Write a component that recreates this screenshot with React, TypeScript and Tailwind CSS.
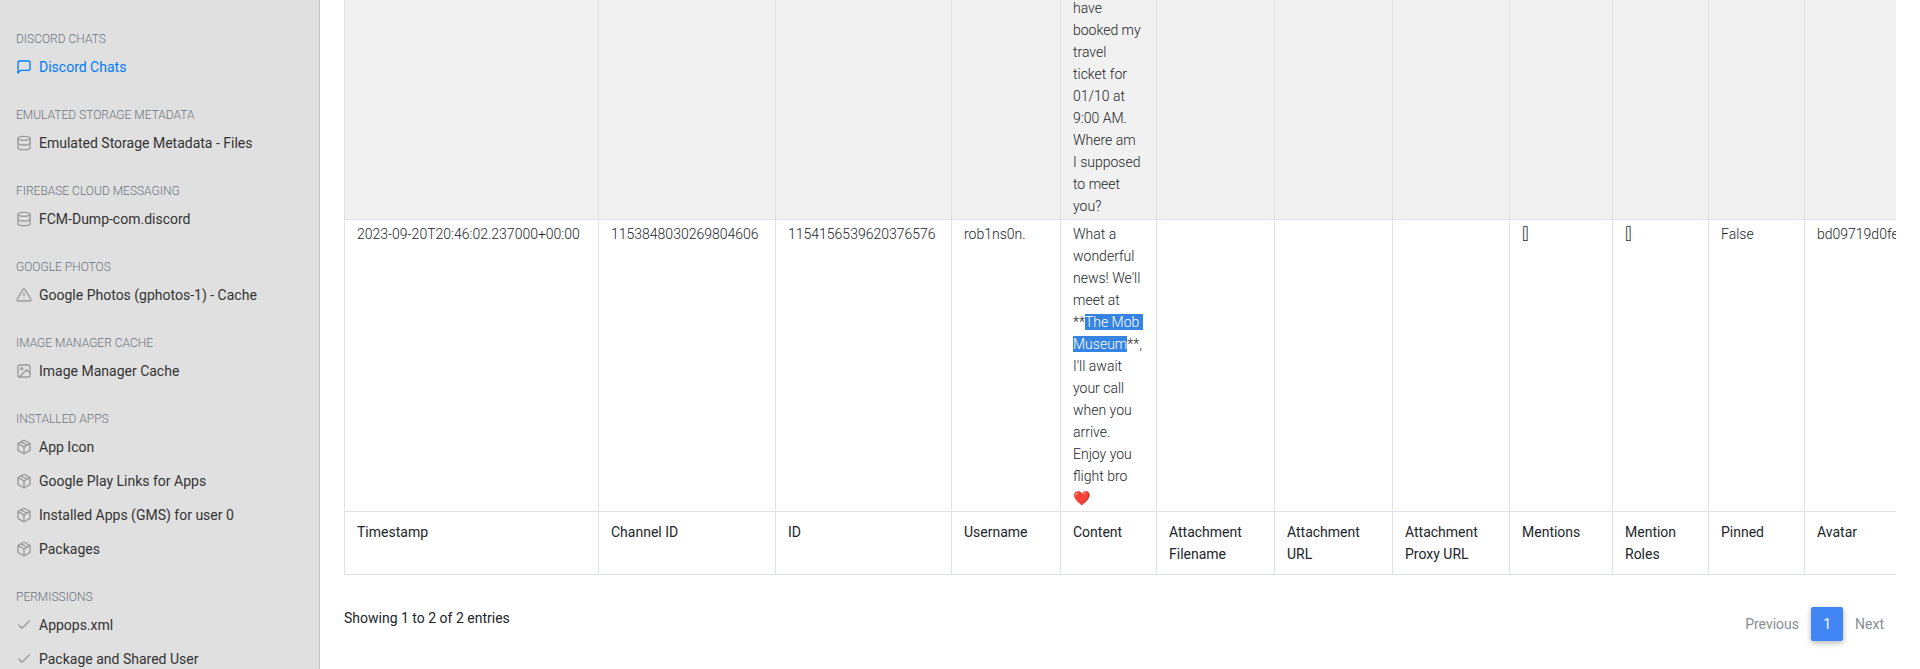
import React from "react";
import {
  FiAlertTriangle,
  FiCheck,
  FiDatabase,
  FiImage,
  FiMessageSquare,
  FiPackage,
} from "react-icons/fi";
import type { IconType } from "react-icons";

type Section = { title: string; icon: IconType; items: string[] };

const sections: Section[] = [
  { title: "Discord Chats", icon: FiMessageSquare, items: ["Discord Chats"] },
  { title: "Emulated Storage Metadata", icon: FiDatabase, items: ["Emulated Storage Metadata - Files"] },
  { title: "Firebase Cloud Messaging", icon: FiDatabase, items: ["FCM-Dump-com.discord"] },
  { title: "Google Photos", icon: FiAlertTriangle, items: ["Google Photos (gphotos-1) - Cache"] },
  { title: "Image Manager Cache", icon: FiImage, items: ["Image Manager Cache"] },
  {
    title: "Installed Apps",
    icon: FiPackage,
    items: ["App Icon", "Google Play Links for Apps", "Installed Apps (GMS) for user 0", "Packages"],
  },
  { title: "Permissions", icon: FiCheck, items: ["Appops.xml", "Package and Shared User"] },
];

const active = "Discord Chats";

const columns = [
  { label: "Timestamp", width: "w-[254px]" },
  { label: "Channel ID", width: "w-[177px]" },
  { label: "ID", width: "w-[176px]" },
  { label: "Username", width: "w-[109px]" },
  { label: "Content", width: "w-24" },
  { label: "Attachment Filename", width: "w-[118px]" },
  { label: "Attachment URL", width: "w-[118px]" },
  { label: "Attachment Proxy URL", width: "w-[117px]" },
  { label: "Mentions", width: "w-[103px]" },
  { label: "Mention Roles", width: "w-24" },
  { label: "Pinned", width: "w-24" },
  { label: "Avatar", width: "w-80" },
];

const firstMessage = (
  <>
    have booked my travel
    <br />
    ticket for 01/10 at
    <br />
    9:00 AM. Where am
    <br />I supposed to meet you?
  </>
);

const secondMessage = (
  <>
    What a wonderful news! We'll meet at **
    <span className="bg-[#3584e4] text-white">The&nbsp;Mob&nbsp;</span>
    <br />
    <span className="bg-[#3584e4] text-white">Museum</span>**, I'll await your call when you arrive.
    Enjoy you flight bro <span className="whitespace-nowrap">❤️</span>
  </>
);

const rows: React.ReactNode[][] = [
  ["", "", "", "", firstMessage, "", "", "", "", "", "", ""],
  [
    "2023-09-20T20:46:02.237000+00:00",
    "1153848030269804606",
    "1154156539620376576",
    "rob1ns0n.",
    secondMessage,
    "",
    "",
    "",
    "[]",
    "[]",
    "False",
    "bd09719d0fe",
  ],
];

function Sidebar() {
  return (
    <nav className="w-80 shrink-0 overflow-hidden border-r border-[#c4c4c4] bg-[#e0e0e0] pt-6">
      {sections.map(({ title, icon: Icon, items }) => (
        <section key={title} className="pb-4">
          <h6 className="px-4 pt-1 text-[12px] leading-[22px] font-light text-[#6c757d] uppercase">
            {title}
          </h6>
          <ul>
            {items.map((item) => (
              <li key={item}>
                <a
                  href="#"
                  className={
                    item === active
                      ? "flex h-[34px] items-center gap-[7px] px-4 text-[14px] whitespace-nowrap text-[#007bff]"
                      : "flex h-[34px] items-center gap-[7px] px-4 text-[14px] whitespace-nowrap text-[#333333]"
                  }
                >
                  <Icon
                    className={item === active ? "size-4 shrink-0" : "size-4 shrink-0 text-[#999999]"}
                    aria-hidden="true"
                  />
                  {item}
                </a>
              </li>
            ))}
          </ul>
        </section>
      ))}
    </nav>
  );
}

function MessageTable() {
  return (
    <div className="overflow-hidden">
      <table className="w-[1780px] table-fixed border-collapse text-[14px] leading-[22px]">
        <colgroup>
          {columns.map(({ label, width }) => (
            <col key={label} className={width} />
          ))}
        </colgroup>
        <tbody className="font-light">
          {rows.map((cells, r) => (
            <tr key={r} className="odd:bg-[#f1f1f1]">
              {cells.map((cell, c) => (
                <td key={c} className="border border-[#dee2e6] px-3 pt-[3px] pb-[2px] align-top">
                  {cell}
                </td>
              ))}
            </tr>
          ))}
        </tbody>
        <tfoot>
          <tr>
            {columns.map(({ label }) => (
              <th
                key={label}
                scope="col"
                className="border border-[#dee2e6] px-3 py-[9px] text-left align-top font-normal"
              >
                {label}
              </th>
            ))}
          </tr>
        </tfoot>
      </table>
    </div>
  );
}

export default function App() {
  return (
    <div className="flex h-screen overflow-hidden bg-white font-[Roboto,sans-serif] text-[#212529]">
      <Sidebar />
      <main className="min-w-0 flex-1 px-6">
        <div className="-mt-[7px]">
          <MessageTable />
        </div>
        <div className="flex items-start justify-between pt-8 text-[14px]">
          <p className="leading-[22px]">Showing 1 to 2 of 2 entries</p>
          <div className="flex items-center">
            <button type="button" disabled className="h-[34px] px-3 text-[#868e96]">
              Previous
            </button>
            <button
              type="button"
              aria-current="page"
              className="h-[34px] w-8 rounded-xs bg-[#4285f4] text-white shadow-[0_2px_5px_0_rgba(0,0,0,0.2),0_2px_10px_0_rgba(0,0,0,0.1)]"
            >
              1
            </button>
            <button type="button" disabled className="h-[34px] px-3 text-[#868e96]">
              Next
            </button>
          </div>
        </div>
      </main>
    </div>
  );
}
